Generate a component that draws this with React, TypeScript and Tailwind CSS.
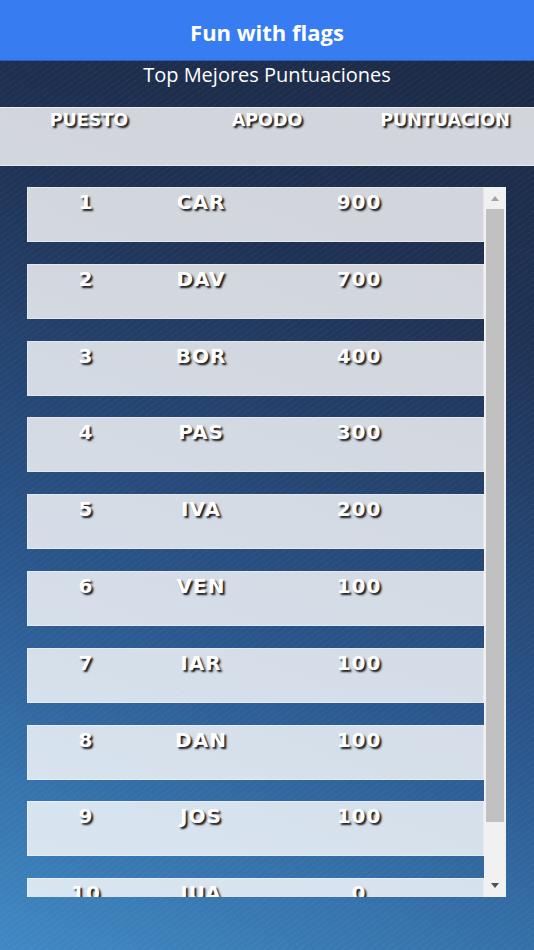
const SCORES = [
  { puesto: 1, apodo: 'CAR', puntos: 900 },
  { puesto: 2, apodo: 'DAV', puntos: 700 },
  { puesto: 3, apodo: 'BOR', puntos: 400 },
  { puesto: 4, apodo: 'PAS', puntos: 300 },
  { puesto: 5, apodo: 'IVA', puntos: 200 },
  { puesto: 6, apodo: 'VEN', puntos: 100 },
  { puesto: 7, apodo: 'IAR', puntos: 100 },
  { puesto: 8, apodo: 'DAN', puntos: 100 },
  { puesto: 9, apodo: 'JOS', puntos: 100 },
  { puesto: 10, apodo: 'JUA', puntos: 0 },
];

const cell = "text-center text-white leading-none font-['DejaVu_Sans',sans-serif] font-bold [text-shadow:2px_2px_2px_rgba(0,0,0,0.9)]";

export default function App() {
  return (
    <div className="relative w-[534px] h-[950px] overflow-hidden bg-[linear-gradient(200deg,#1b2842_0%,#1f3254_30%,#2a568c_65%,#4089c4_100%)]">
      <div className="absolute inset-0 bg-[repeating-linear-gradient(-35deg,rgba(255,255,255,0.035)_0px,rgba(255,255,255,0.035)_1px,transparent_1px,transparent_5px)]" />
      <div className="relative flex flex-col">
        <header className="h-[61px] bg-[#377cf0] flex items-center justify-center border-b border-[#2a5fb8]">
          <h1 className="text-white text-[22px] font-bold font-['Open_Sans',sans-serif] pt-1">Fun with flags</h1>
        </header>

        <div className="h-[46px] flex justify-center">
          <h2 className="text-white text-[20px] font-['Open_Sans',sans-serif] leading-none pt-[4px]">Top Mejores Puntuaciones</h2>
        </div>

        <div className="h-[59px] bg-white/80 border-y border-white/50 grid grid-cols-3">
          {['PUESTO', 'APODO', 'PUNTUACION'].map((h) => (
            <div key={h} className={`${cell} text-[17.5px] pt-[4px]`}>{h}</div>
          ))}
        </div>

        <div className="mt-[21px] ml-[27px] w-[479px] h-[710px] flex">
          <div className="flex-1 overflow-hidden flex flex-col gap-[21.8px]">
            {SCORES.map((s) => (
              <div key={s.puesto} className="h-[55px] shrink-0 bg-white/80 border border-white/40 grid grid-cols-[116px_114px_202px_1fr]">
                <div className={`${cell} text-[20px] tracking-[1px] pt-[4px]`}>{s.puesto}</div>
                <div className={`${cell} text-[20px] tracking-[1px] pt-[4px]`}>{s.apodo}</div>
                <div className={`${cell} text-[20px] tracking-[1px] pt-[4px]`}>{s.puntos}</div>
                <div />
              </div>
            ))}
          </div>
          <div className="w-[22px] bg-[#f1f1f1] flex flex-col items-center">
            <div className="h-[22px] flex items-center justify-center">
              <div className="w-0 h-0 border-x-[4px] border-x-transparent border-b-[5px] border-b-[#a3a3a3]" />
            </div>
            <div className="w-[18px] h-[613px] bg-[#c1c1c1]" />
            <div className="flex-1 flex items-end justify-center pb-[9px]">
              <div className="w-0 h-0 border-x-[4px] border-x-transparent border-t-[5px] border-t-[#505050]" />
            </div>
          </div>
        </div>
      </div>
    </div>
  );
}
